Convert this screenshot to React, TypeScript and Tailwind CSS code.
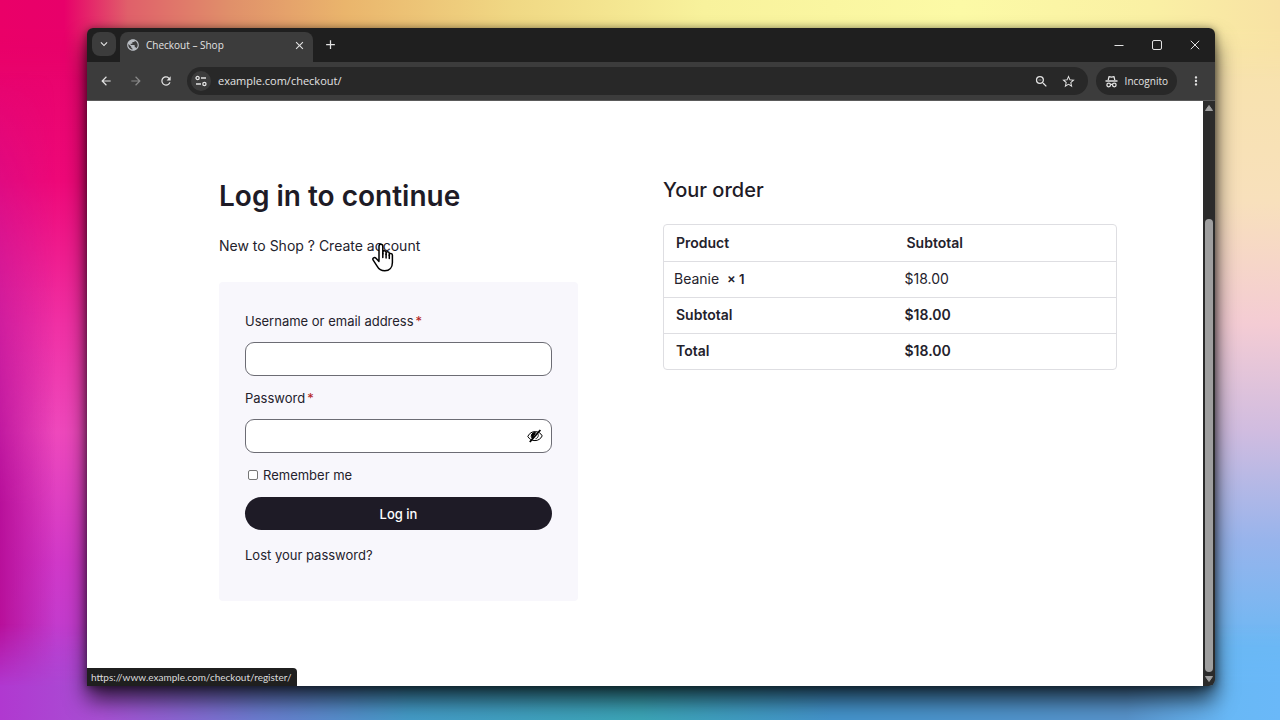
import {
  MdAdd,
  MdArrowBack,
  MdArrowForward,
  MdClose,
  MdKeyboardArrowDown,
  MdMoreVert,
  MdPublic,
  MdRefresh,
  MdStarBorder,
  MdZoomOut,
} from "react-icons/md";

function TuneIcon() {
  return (
    <svg width="12" height="12" viewBox="0 0 12 12" fill="none" stroke="currentColor" strokeWidth="1.3">
      <circle cx="2.6" cy="3" r="1.6" />
      <path d="M6 3h5" />
      <circle cx="9.4" cy="9" r="1.6" />
      <path d="M1 9h5" />
    </svg>
  );
}

function IncognitoIcon() {
  return (
    <svg width="13" height="13" viewBox="0 0 13 13" fill="none" stroke="currentColor" strokeWidth="1.3">
      <path d="M3.2 5.2 4 1.6l2.5.6 2.5-.6.8 3.6" strokeLinejoin="round" />
      <path d="M.5 6.1h12" strokeWidth="1.5" />
      <circle cx="3.7" cy="10" r="1.8" />
      <circle cx="9.3" cy="10" r="1.8" />
      <path d="M5.5 9.6q1-.6 2 0" />
    </svg>
  );
}

function EyeOffIcon() {
  return (
    <svg width="16" height="14" viewBox="0 0 16 14" fill="none" stroke="currentColor">
      <path d="M.8 7.4C2.4 4 5.3 2.6 8.2 2.6c3 0 5.6 1.5 7 4.3-1.4 3-4.2 4.7-7.2 4.7S2.4 10.400.8 7.4z" />
      <path d="M8.600 3.600a3.500 3.500 0 0 0-3.400 5.800z" fill="currentColor" />
      <path d="M11.200 5.200a3.600 3.600 0 0 1-2.700 4.600" strokeWidth=".8" />
      <path d="M2.800 13 13.400 1" strokeWidth="1.800" />
    </svg>
  );
}

function HandCursor() {
  return (
    <svg width="24" height="30" viewBox="0 0 24 30" fill="#fff" stroke="#000" strokeWidth="1.500" strokeLinejoin="round" strokeLinecap="round">
      <path d="M8 17.500V3.400C8 .6 11.800.6 11.800 3.400V11V9.200c0-1.900 3.300-1.900 3.300.2V11.600V10c0-1.800 3.200-1.700 3.200.3V12.400V11.600c0-1.700 3.100-1.600 3.100.4V19.500c0 5-2.900 8.300-7.600 8.300-4 0-6-1.600-7.700-4.700L2.200 17.200C1 15.100 3.500 13.700 5 15.300L8 18.500" />
      <path d="M11.800 10v4.500M15.100 11v4M18.300 12v3.500" fill="none" />
    </svg>
  );
}

function Backdrop() {
  return (
    <div aria-hidden="true" className="absolute inset-0 -z-10">
      <div className="absolute inset-y-0 left-0 w-1/2 bg-[linear-gradient(180deg,#e60066_0%,#ee0878_25%,#f030a4_45%,#ee48bc_60%,#d038c8_78%,#b040d4_100%)]" />
      <div className="absolute inset-y-0 left-0 w-14 bg-[linear-gradient(90deg,#b8109a_0%,transparent_100%)] mask-t-from-30% mask-t-to-90%" />
      <div className="absolute inset-y-0 right-0 w-1/2 bg-[linear-gradient(180deg,#f8e4a6_0%,#f8e0bc_28%,#f4ccd4_45%,#d0bce0_60%,#98b4ec_75%,#6cb8f4_90%,#6ab8f8_100%)]" />
      <div className="absolute inset-x-0 top-0 h-20 bg-[linear-gradient(90deg,#ea0068_0%,#e8006a_5%,#e0606a_10%,#e0906a_18%,#eab56c_27%,#f0d884_40%,#f8f29c_55%,#fcfaa6_75%,#faf0a4_90%,#f8e2a4_100%)] mask-b-from-35%" />
      <div className="absolute inset-x-0 bottom-0 h-24 bg-[linear-gradient(90deg,#b038d0_0%,#a850d4_8%,#6c7cd0_20%,#449cc8_32%,#3ca6b8_50%,#4494cc_65%,#5894cc_88%,#68b8f6_96%,#6ab8f8_100%)] mask-t-from-35%" />
    </div>
  );
}

function TitleBar() {
  return (
    <div className="flex h-[34px] items-end bg-[#1f1f1f] pl-[5px] text-[#e3e3e3]">
      <button aria-label="Search tabs" className="mb-[6px] flex size-6 items-center justify-center rounded-lg bg-[#3c3c3c]">
        <MdKeyboardArrowDown size={14} />
      </button>
      <div className="ml-1 flex h-[30px] w-[193px] items-center rounded-t-lg bg-[#3c3c3c] pr-[7px] pb-1 pl-[6px]">
        <MdPublic size={14} className="text-[#b8bcc2]" />
        <span className="ml-[6px] flex-1 text-[10px]">Checkout – Shop</span>
        <button aria-label="Close tab">
          <MdClose size={13} />
        </button>
      </div>
      <button aria-label="New tab" className="mb-[10px] ml-[10px]">
        <MdAdd size={15} />
      </button>
      <div className="mr-[15px] mb-3 ml-auto flex items-center gap-[28px]">
        <button aria-label="Minimize">
          <svg width="10" height="10" viewBox="0 0 10 10" stroke="currentColor">
            <path d="M.5 5.500h9" />
          </svg>
        </button>
        <button aria-label="Maximize">
          <svg width="10" height="10" viewBox="0 0 10 10" fill="none" stroke="currentColor">
            <rect x=".5" y=".5" width="9" height="9" rx="1.500" />
          </svg>
        </button>
        <button aria-label="Close window">
          <svg width="10" height="10" viewBox="0 0 10 10" stroke="currentColor">
            <path d="m.8.8 8.400 8.400M9.200.8.800 9.200" />
          </svg>
        </button>
      </div>
    </div>
  );
}

function Toolbar() {
  return (
    <div className="flex h-[39px] items-center border-b border-[#5a5a5a] bg-[#3c3c3c] px-3 text-[#e3e3e3]">
      <div className="flex items-center gap-4">
        <button aria-label="Back">
          <MdArrowBack size={14} />
        </button>
        <button aria-label="Forward" className="text-[#8a8a8a]">
          <MdArrowForward size={14} />
        </button>
        <button aria-label="Reload">
          <MdRefresh size={14} />
        </button>
      </div>
      <div className="ml-[14px] flex h-7 flex-1 items-center rounded-full bg-[#282828] pr-3 pl-1">
        <button aria-label="View site information" className="flex size-5 items-center justify-center rounded-full bg-[#3c3c3c]">
          <TuneIcon />
        </button>
        <input
          aria-label="Address"
          defaultValue="example.com/checkout/"
          className="ml-[7px] min-w-0 flex-1 bg-transparent text-[11px] outline-none"
        />
        <div className="flex items-center gap-3">
          <button aria-label="Zoom">
            <MdZoomOut size={15} />
          </button>
          <button aria-label="Bookmark this tab">
            <MdStarBorder size={15} />
          </button>
        </div>
      </div>
      <button className="ml-2 flex h-7 items-center gap-[7px] rounded-full bg-[#282828] px-[9px] text-[10px]">
        <IncognitoIcon />
        Incognito
      </button>
      <button aria-label="Menu" className="ml-3">
        <MdMoreVert size={14} />
      </button>
    </div>
  );
}

function Scrollbar() {
  return (
    <div aria-hidden="true" className="flex w-3 flex-col items-center bg-[#2b2b2b] text-[#9f9f9f]">
      <svg width="8" height="14" viewBox="0 0 8 14" fill="currentColor">
        <path d="M4 4.500 7.500 9.500h-7z" stroke="currentColor" strokeLinejoin="round" />
      </svg>
      <div className="min-h-0 flex-[104]" />
      <div className="min-h-0 w-2 flex-[453] rounded-full bg-[#9f9f9f]" />
      <svg width="8" height="14" viewBox="0 0 8 14" fill="currentColor">
        <path d="M4 9.500.5 4.500h7z" stroke="currentColor" strokeLinejoin="round" />
      </svg>
    </div>
  );
}

function Required() {
  return <span className="ml-[2px] text-[#b32020]">*</span>;
}

function LoginForm() {
  return (
    <form className="mt-[26px] flex flex-col rounded-sm bg-[#f8f7fc] px-[26px] pt-[29px] pb-9">
      <label htmlFor="username" className="mb-[11px]">
        Username or email address
        <Required />
      </label>
      <input id="username" type="text" className="mb-3 h-[34px] rounded-[9px] border border-[#6c6c74] bg-white px-3" />
      <label htmlFor="password" className="mb-[11px]">
        Password
        <Required />
      </label>
      <div className="mb-3 flex h-[34px] items-center rounded-[9px] border border-[#6c6c74] bg-white pr-2">
        <input id="password" type="password" className="min-w-0 flex-1 px-3 outline-none" />
        <button type="button" aria-label="Show password" className="text-black">
          <EyeOffIcon />
        </button>
      </div>
      <label className="mb-3 flex items-center gap-[5px] pl-[3px]">
        <input type="checkbox" className="size-[10px] appearance-none rounded-xs border border-[#767676] bg-white" />
        Remember me
      </label>
      <button type="submit" className="mb-[15px] h-[33px] rounded-full bg-[#1e1b26] font-medium text-white">
        Log in
      </button>
      <a href="#lost-password" className="self-start">
        Lost your password?
      </a>
    </form>
  );
}

function OrderTable() {
  return (
    <div className="mt-5 overflow-hidden rounded-sm border border-[#dedee2]">
      <table className="w-full table-fixed text-left text-[14px] [&_td]:h-9 [&_td]:px-[10px] [&_th]:h-9 [&_th]:px-3 [&_th]:font-semibold [&_tr+tr]:border-t [&_tr]:border-[#dedee2]">
        <tbody>
          <tr>
            <th scope="col" className="w-[51%]">Product</th>
            <th scope="col">Subtotal</th>
          </tr>
          <tr>
            <td>
              Beanie&nbsp; <strong className="text-[13px] font-semibold">× 1</strong>
            </td>
            <td>$18.00</td>
          </tr>
          <tr>
            <th scope="row">Subtotal</th>
            <td className="font-semibold">$18.00</td>
          </tr>
          <tr>
            <th scope="row">Total</th>
            <td className="font-semibold">$18.00</td>
          </tr>
        </tbody>
      </table>
    </div>
  );
}

function CheckoutPage() {
  return (
    <main className="grid flex-1 grid-cols-[359fr_454fr] content-start gap-[85px] bg-white pt-[75px] pr-[86px] pl-[132px] font-[Inter,sans-serif] text-[13px] leading-5 text-[#24222c]">
      <section>
        <h1 className="text-[28px] leading-10 font-semibold text-[#1e1b26]">Log in to continue</h1>
        <p className="mt-5 text-[14px]">
          New to Shop ?{" "}
          <a href="#register" className="relative">
            Create account
            <span aria-hidden="true" className="absolute top-[6px] left-13">
              <HandCursor />
            </span>
          </a>
        </p>
        <LoginForm />
      </section>
      <section>
        <h2 className="text-[20px] leading-7 font-medium text-[#1e1b26]">Your order</h2>
        <OrderTable />
      </section>
    </main>
  );
}

export default function App() {
  return (
    <div className="relative isolate flex min-h-screen overflow-hidden pt-7 pr-[65px] pb-[34px] pl-[87px] font-['Open_Sans',sans-serif]">
      <Backdrop />
      <div className="relative flex flex-1 flex-col overflow-hidden rounded-t-md rounded-br-md shadow-[0_14px_22px_rgba(0,0,0,0.7),0_1px_8px_rgba(0,0,0,0.5)]">
        <TitleBar />
        <Toolbar />
        <div className="flex flex-1">
          <CheckoutPage />
          <Scrollbar />
        </div>
        <div className="absolute bottom-0 left-0 rounded-tr-sm bg-[#1f1f1f] pr-[6px] pl-1 font-[Lato,sans-serif] text-[10px] leading-[18px] text-[#dcdcdc]">
          https://www.example.com/checkout/register/
        </div>
      </div>
    </div>
  );
}
